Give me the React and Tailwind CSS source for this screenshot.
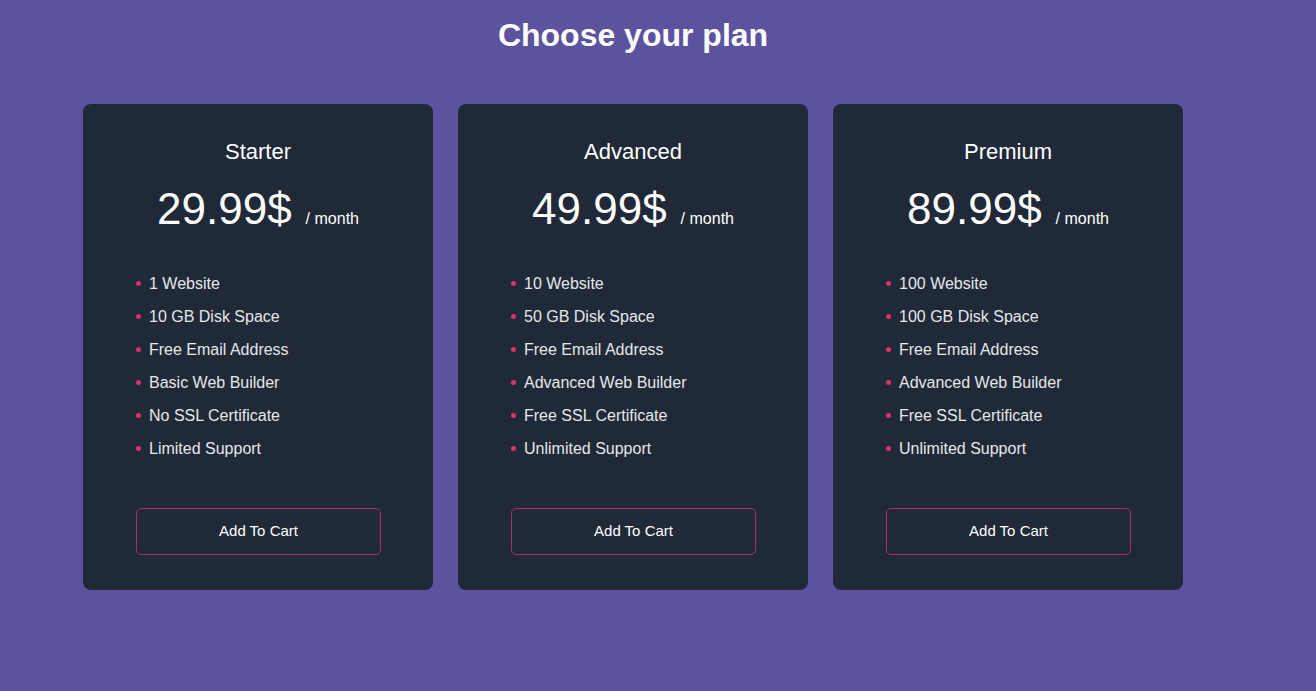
const plans = [
  {
    name: 'Starter',
    price: '29.99$',
    features: ['1 Website', '10 GB Disk Space', 'Free Email Address', 'Basic Web Builder', 'No SSL Certificate', 'Limited Support'],
  },
  {
    name: 'Advanced',
    price: '49.99$',
    features: ['10 Website', '50 GB Disk Space', 'Free Email Address', 'Advanced Web Builder', 'Free SSL Certificate', 'Unlimited Support'],
  },
  {
    name: 'Premium',
    price: '89.99$',
    features: ['100 Website', '100 GB Disk Space', 'Free Email Address', 'Advanced Web Builder', 'Free SSL Certificate', 'Unlimited Support'],
  },
];

const PlanCard = ({ plan }) => (
  <div className="w-[350px] h-[486px] rounded-lg bg-[#1f2937] px-[53px] pt-[35px] flex flex-col">
    <h2 className="text-center text-[22px] leading-[26px] text-white">{plan.name}</h2>
    <div className="mt-[18px] flex items-baseline justify-center gap-[14px]">
      <span className="text-[44px] leading-[52px] text-white">{plan.price}</span>
      <span className="text-[16px] text-white">/ month</span>
    </div>
    <ul className="mt-[32px] flex flex-col">
      {plan.features.map((f) => (
        <li key={f} className="flex items-center h-[33px] text-[16px] text-[#e5e7eb]">
          <span className="w-[5px] h-[5px] rounded-full bg-[#e0306a] mr-[8px]" />
          {f}
        </li>
      ))}
    </ul>
    <button className="mt-[43px] w-[245px] h-[47px] rounded-[5px] border border-[#a8325f] text-[15px] text-white">
      Add To Cart
    </button>
  </div>
);

export default function App() {
  return (
    <div className="min-h-[691px] bg-[#5c539e] font-['Liberation_Sans',Arial,sans-serif]">
      <div className="w-[1100px] ml-[83px] pt-[16px]">
        <h1 className="text-center text-[32px] leading-[38px] font-bold text-white">Choose your plan</h1>
        <div className="mt-[50px] flex gap-[25px]">
          {plans.map((p) => (
            <PlanCard key={p.name} plan={p} />
          ))}
        </div>
      </div>
    </div>
  );
}
